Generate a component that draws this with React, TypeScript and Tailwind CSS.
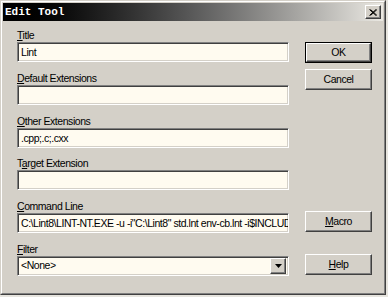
const font = "font-['Tahoma','Liberation_Sans',sans-serif] text-[10.5px] tracking-[-0.45px] text-black";

const raised =
  'border border-t-white border-l-white border-r-[#404040] border-b-[#404040] shadow-[inset_-1px_-1px_0_#808080] bg-[#d4d0c8]';
const sunken =
  'border border-t-[#808080] border-l-[#808080] border-r-white border-b-white shadow-[inset_1px_1px_0_#404040,inset_-1px_-1px_0_#d4d0c8] bg-[#fffbf0]';

const Label = ({ pre = '', hot, rest }: { pre?: string; hot: string; rest: string }) => (
  <div className="h-[14px] leading-[14px] whitespace-nowrap">
    {pre}
    <span className="underline underline-offset-[1px]">{hot}</span>
    {rest}
  </div>
);

const Field = ({ value = '' }: { value?: string }) => (
  <div className={`${sunken} h-[20px] w-[272px] overflow-hidden whitespace-nowrap px-[3px] leading-[18px]`}>
    {value}
  </div>
);

const Button = ({ children, isDefault = false }: { children: React.ReactNode; isDefault?: boolean }) =>
  isDefault ? (
    <div className="h-[21px] w-[67px] border border-black">
      <div className={`${raised} flex h-full w-full items-center justify-center`}>{children}</div>
    </div>
  ) : (
    <div className={`${raised} flex h-[21px] w-[67px] items-center justify-center`}>{children}</div>
  );

const App = () => {
  return (
    <div className={`h-[297px] w-[388px] bg-[#e6e4de] ${font}`}>
      <div className="h-[295px] w-[386px] border border-t-[#d4d0c8] border-l-[#d4d0c8] border-r-[#404040] border-b-[#404040]">
        <div className="h-full w-full border border-t-white border-l-white border-r-[#808080] border-b-[#808080] bg-[#d4d0c8] p-[1px]">
          {/* title bar */}
          <div className="flex h-[18px] items-center justify-between bg-gradient-to-r from-black via-[#5a5a5a] to-[#ebe9e3] pl-[2px] pr-[2px]">
            <span className="font-['Liberation_Mono',monospace] text-[11px] font-bold tracking-[0px] text-white">
              Edit Tool
            </span>
            <div className={`${raised} flex h-[14px] w-[16px] items-center justify-center`}>
              <svg width="8" height="7" viewBox="0 0 8 7">
                <path d="M0.5 0.5 L7 6.5 M1.5 0.5 L8 6.5 M7 0.5 L0.5 6.5 M8 0.5 L1.5 6.5" stroke="black" strokeWidth="1" />
              </svg>
            </div>
          </div>

          {/* body */}
          <div className="flex gap-[16px] pl-[14px] pt-[7px]">
            <div className="flex w-[272px] flex-col gap-[8.8px]">
              <div>
                <Label hot="T" rest="itle" />
                <Field value="Lint" />
              </div>
              <div>
                <Label hot="D" rest="efault Extensions" />
                <Field />
              </div>
              <div>
                <Label hot="O" rest="ther Extensions" />
                <Field value=".cpp;.c;.cxx" />
              </div>
              <div>
                <Label pre="T" hot="a" rest="rget Extension" />
                <Field />
              </div>
              <div>
                <Label hot="C" rest="ommand Line" />
                <Field value={'C:\\Lint8\\LINT-NT.EXE -u -i"C:\\Lint8" std.lnt env-cb.lnt -i$INCLUDE'} />
              </div>
              <div>
                <Label hot="F" rest="ilter" />
                <div className={`${sunken} flex h-[20px] w-[272px] items-center justify-between pl-[3px] pr-[2px]`}>
                  <span>&lt;None&gt;</span>
                  <div className={`${raised} flex h-[16px] w-[16px] items-center justify-center`}>
                    <svg width="7" height="4" viewBox="0 0 7 4">
                      <path d="M0 0 H7 L3.5 4 Z" fill="black" />
                    </svg>
                  </div>
                </div>
              </div>
            </div>

            <div className="flex w-[67px] flex-col">
              <div className="mt-[14px]">
                <Button isDefault>OK</Button>
              </div>
              <div className="mt-[6px]">
                <Button>Cancel</Button>
              </div>
              <div className="mt-[121px]">
                <Button>
                  <span className="underline underline-offset-[1px]">M</span>acro
                </Button>
              </div>
              <div className="mt-[22px]">
                <Button>
                  <span className="underline underline-offset-[1px]">H</span>elp
                </Button>
              </div>
            </div>
          </div>
        </div>
      </div>
    </div>
  );
};

export default App;
